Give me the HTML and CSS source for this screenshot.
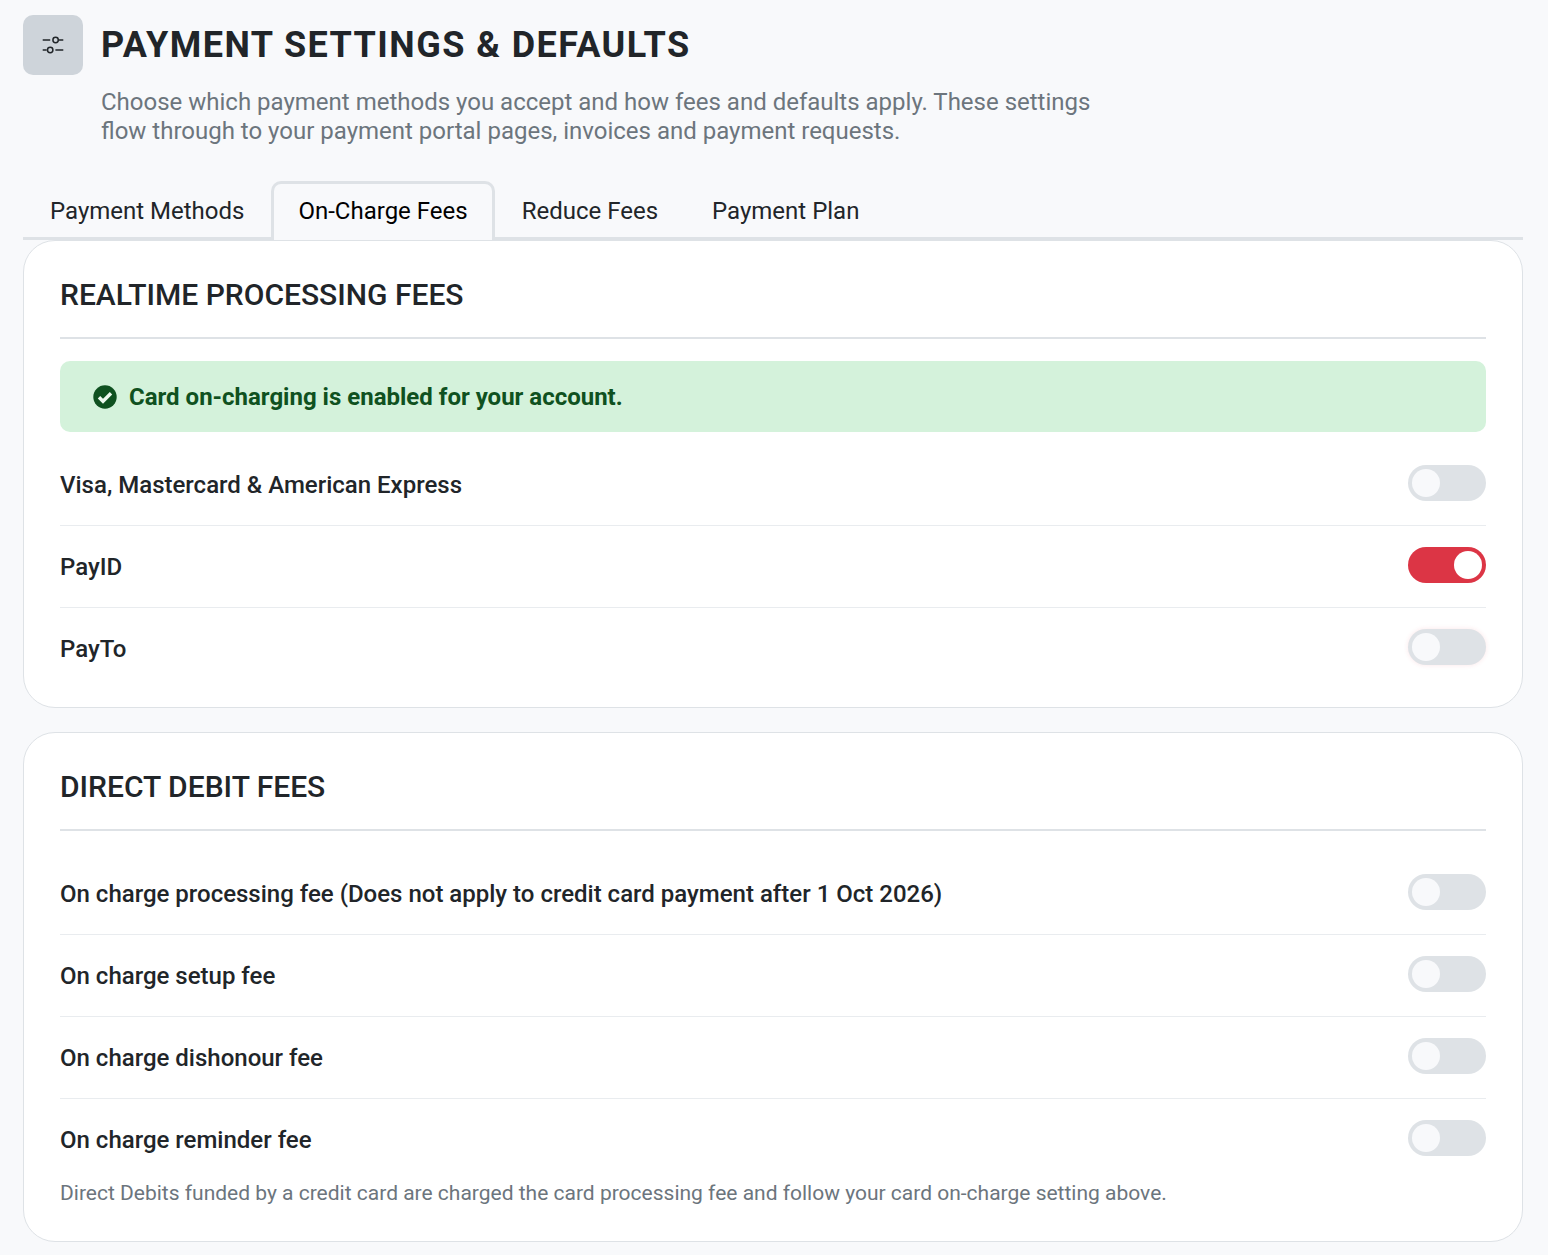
FILE: index.html
```html
<!DOCTYPE html>
<html lang="en">
<head>
    <meta charset="UTF-8">
    <meta name="viewport" content="width=device-width, initial-scale=1.0">
    <title>Payment Settings &amp; Defaults</title>
    <link rel="stylesheet" href="styles.css">
</head>
<body>
    <div class="page">
        <header class="page-head">
            <div class="head-icon">
                <svg width="24" height="24" viewBox="0 0 24 24" fill="none" stroke="#212529" stroke-width="1.5">
                    <path d="M1.7 7H9.2M17.9 7h4.4"/>
                    <circle cx="14.6" cy="7" r="2.7"/>
                    <path d="M1.7 17h4M14.4 17h7.9"/>
                    <circle cx="9.2" cy="17" r="2.7"/>
                </svg>
            </div>
            <div class="head-text">
                <h1>PAYMENT SETTINGS &amp; DEFAULTS</h1>
                <p>Choose which payment methods you accept and how fees and defaults apply. These settings<br>flow through to your payment portal pages, invoices and payment requests.</p>
            </div>
        </header>

        <ul class="tabs">
            <li><a href="#">Payment Methods</a></li>
            <li><a href="#" class="active">On-Charge Fees</a></li>
            <li><a href="#">Reduce Fees</a></li>
            <li><a href="#">Payment Plan</a></li>
        </ul>

        <section class="card card-realtime">
            <h2>REALTIME PROCESSING FEES</h2>
            <div class="alert">
                <svg width="24" height="24" viewBox="0 0 24 24">
                    <circle cx="12" cy="12" r="11.7" fill="#0f5120"/>
                    <path d="M6 12.3l4 4 8-8" fill="none" stroke="#eef9f0" stroke-width="3.4"/>
                </svg>
                <span>Card on-charging is enabled for your account.</span>
            </div>
            <div class="row first-tight">
                <span>Visa, Mastercard &amp; American Express</span>
                <div class="switch"></div>
            </div>
            <div class="row">
                <span>PayID</span>
                <div class="switch on"></div>
            </div>
            <div class="row">
                <span>PayTo</span>
                <div class="switch glow"></div>
            </div>
        </section>

        <section class="card card-debit">
            <h2>DIRECT DEBIT FEES</h2>
            <div class="row first-open">
                <span>On charge processing fee (Does not apply to credit card payment after 1 Oct 2026)</span>
                <div class="switch"></div>
            </div>
            <div class="row">
                <span>On charge setup fee</span>
                <div class="switch"></div>
            </div>
            <div class="row">
                <span>On charge dishonour fee</span>
                <div class="switch"></div>
            </div>
            <div class="row">
                <span>On charge reminder fee</span>
                <div class="switch"></div>
            </div>
            <p class="note">Direct Debits funded by a credit card are charged the card processing fee and follow your card on-charge setting above.</p>
        </section>
    </div>
</body>
</html>
```
FILE: styles.css
```css
body {
    font-family: Roboto, "Liberation Sans", sans-serif;
    margin: 0;
    padding: 0;
    background-color: #f8f9fb;
    color: #212529;
}
.page {
    padding: 15px 25px 13px 23px;
}
.page-head {
    display: flex;
    gap: 18px;
}
.head-icon {
    width: 60px;
    height: 60px;
    flex-shrink: 0;
    display: flex;
    align-items: center;
    justify-content: center;
    background-color: #ced4da;
    border-radius: 10px;
}
.head-text h1 {
    margin: 0;
    font-size: 36px;
    line-height: 60px;
    font-weight: 700;
    letter-spacing: 1.44px;
}
.head-text p {
    margin: 0;
    padding-top: 13px;
    font-size: 24px;
    line-height: 29px;
    color: #6c757d;
}
.tabs {
    list-style: none;
    display: flex;
    margin: 35px 0 0;
    padding: 0;
    border-bottom: 3px solid #dee2e6;
    height: 56px;
}
.tabs a {
    display: block;
    height: 56px;
    box-sizing: border-box;
    padding: 0 24px;
    border: 3px solid transparent;
    border-bottom: 0;
    border-radius: 10px 10px 0 0;
    font-size: 24px;
    line-height: 54px;
    color: #212529;
    text-decoration: none;
}
.tabs a.active {
    height: 59px;
    border-color: #dee2e6;
    background-color: #f8f9fb;
    color: #000000;
}
.card {
    background-color: #ffffff;
    border: 1px solid #dee2e6;
    border-radius: 32px;
    padding: 36px;
    margin-bottom: 24px;
}
.card-realtime {
    padding-bottom: 0;
    height: 468px;
    box-sizing: border-box;
}
.card-debit {
    padding-bottom: 35px;
}
.card h2 {
    margin: 0;
    padding-bottom: 24px;
    font-size: 30px;
    line-height: 36px;
    font-weight: 500;
    color: #212529;
    border-bottom: 2px solid #dee2e6;
}
.alert {
    display: flex;
    align-items: center;
    gap: 12px;
    height: 71px;
    margin-top: 22px;
    padding: 0 33px;
    background-color: #d4f2db;
    border-radius: 10px;
    color: #0f5120;
    font-size: 24px;
    font-weight: 700;
}
.row {
    display: flex;
    justify-content: space-between;
    align-items: center;
    height: 82px;
    box-sizing: border-box;
    border-top: 1px solid #e9ecef;
    font-size: 24px;
    font-weight: 500;
}
.row.first-tight {
    border-top: 0;
    height: 93px;
    padding-top: 12px;
}
.row.first-open {
    border-top: 0;
    height: 103px;
    padding-top: 22px;
}
.switch {
    position: relative;
    width: 78px;
    height: 36px;
    flex-shrink: 0;
    box-sizing: border-box;
    margin-top: -4px;
    border-radius: 18px;
    background-color: #dee2e6;
}
.switch::after {
    content: "";
    position: absolute;
    top: 4px;
    left: 4px;
    width: 28px;
    height: 28px;
    border-radius: 50%;
    background-color: #f8f9fb;
}
.switch.on {
    background-color: #dc3545;
}
.switch.on::after {
    left: auto;
    right: 4px;
    background-color: #ffffff;
}
.switch.glow {
    box-shadow: 0 0 5px rgba(220, 53, 69, 0.12);
}
.note {
    margin: 0;
    font-size: 21px;
    line-height: 26px;
    color: #6c757d;
}
```
